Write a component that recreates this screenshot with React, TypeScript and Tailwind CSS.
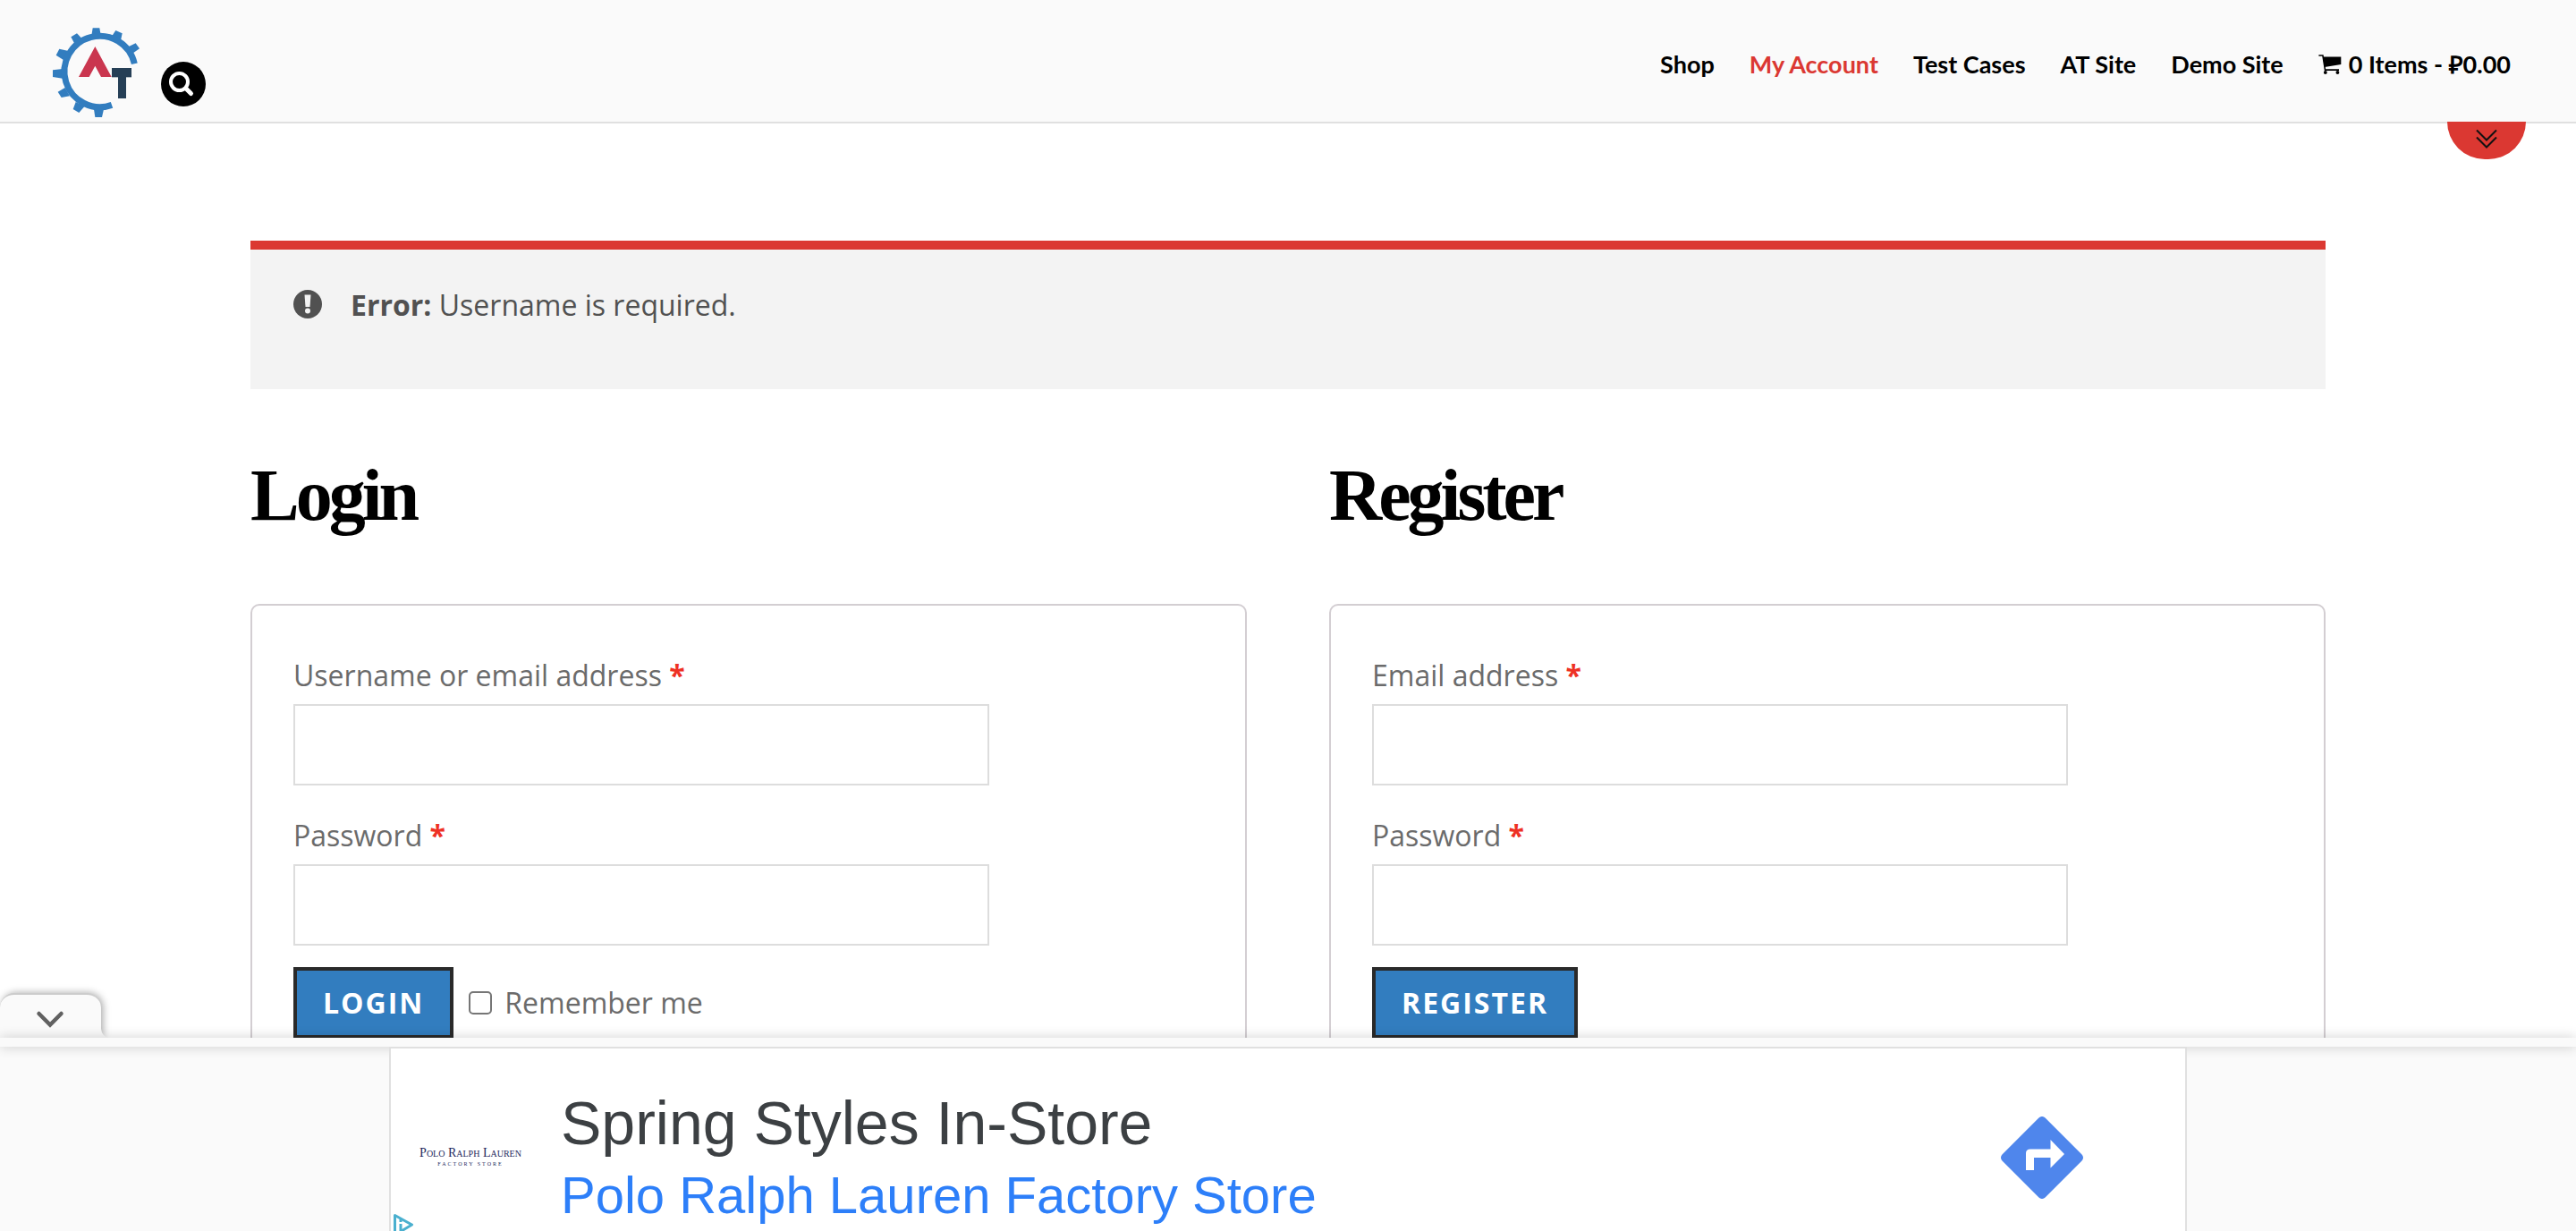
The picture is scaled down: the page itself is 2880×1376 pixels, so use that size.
const navItems = [
  { label: "Shop", active: false },
  { label: "My Account", active: true },
  { label: "Test Cases", active: false },
  { label: "AT Site", active: false },
  { label: "Demo Site", active: false },
];

function Logo() {
  return (
    <svg viewBox="57 63 291 300" className="h-[100px] w-[97px]" aria-hidden="true">
      <g fill="#327dbf">
        <polygon points="191,64 214,64 219,95 186,95" />
        <polygon points="268,72 290,82 284,110 252,96" />
        <polygon points="335,115 348,133 320,152 304,130" />
        <polygon points="118,94 138,82 158,103 132,120" />
        <polygon points="79,134 68,155 94,172 110,141" />
        <polygon points="57,205 57,228 90,233 90,201" />
        <polygon points="74,278 86,297 114,292 98,264" />
        <polygon points="125,336 145,348 164,326 134,312" />
        <polygon points="199,363 222,363 229,332 194,330" />
      </g>
      <path d="M331 184 A 119 119 0 1 0 255 322" fill="none" stroke="#327dbf" strokeWidth="21" />
      <path d="M199 126 L254 228 H219 L199 191 L179 228 H144 Z" fill="#ca364f" />
      <rect x="255" y="198" width="66" height="31" fill="#263f56" />
      <rect x="276" y="228" width="27" height="72" fill="#263f56" />
    </svg>
  );
}

function CartIcon() {
  return (
    <svg viewBox="92 64 80 68" className="h-[22px] w-[26px]" aria-hidden="true">
      <path d="M93 67 H107 L115 117 H163" fill="none" stroke="#000" strokeWidth="5" />
      <path d="M107 72 H170 V98 L113 107 Z" />
      <circle cx="116" cy="126" r="6" />
      <circle cx="158" cy="126" r="6" />
    </svg>
  );
}

function Header() {
  return (
    <header className="flex h-[138px] justify-between border-b-2 border-[#e0e0e0] bg-[#fafafa] pr-[73px] pl-[59px]">
      <div className="flex items-start gap-6 pt-[31px]">
        <a href="#home" aria-label="Home">
          <Logo />
        </a>
        <button type="button" aria-label="Search" className="mt-[38px] flex size-[50px] items-center justify-center rounded-full bg-black">
          <svg viewBox="0 0 50 50" className="size-full" fill="none" stroke="#fff">
            <circle cx="20.500" cy="22.500" r="9.500" strokeWidth="4" />
            <path d="M28 30 L33.500 35.500" strokeWidth="5" strokeLinecap="round" />
          </svg>
        </button>
      </div>
      <nav className="flex h-[144px] items-center gap-[39px] font-['Lato',sans-serif] text-[27px] font-bold text-black">
        {navItems.map((item) => (
          <a key={item.label} href="#page" className={item.active ? "text-[#db3832]" : ""}>
            {item.label}
          </a>
        ))}
        <a href="#cart" className="flex items-center gap-2">
          <CartIcon />
          <span>0 Items - ₽0.00</span>
        </a>
      </nav>
    </header>
  );
}

function TextField({ id, label, type }: { id: string; label: string; type: string }) {
  return (
    <div>
      <label htmlFor={id} className="block h-16 leading-[64px]">
        {label} <span className="font-bold text-[#ee3124]">*</span>
      </label>
      <input id={id} type={type} className="block h-[91px] w-[778px] max-w-full border-2 border-[#ddd] bg-white px-4" />
    </div>
  );
}

function SubmitButton({ children }: { children: string }) {
  return (
    <button type="submit" className="h-[80px] border-4 border-[#2a2a2a] bg-[#327dbf] px-[29px] font-bold tracking-[2px] text-white">
      {children}
    </button>
  );
}

function AdBanner() {
  return (
    <aside className="fixed inset-x-0 bottom-0 font-['Liberation_Sans',sans-serif]">
      <button type="button" aria-label="Collapse" className="relative block h-[50px] w-[113px] rounded-t-[16px] border-t-2 border-[#ccc] bg-[#fafafa] shadow-[2px_0_8px_rgba(0,0,0,0.35)]">
        <svg viewBox="0 0 113 48" className="h-12 w-[113px]" fill="none">
          <path d="M43.500 21 L56 33.500 L68.500 21" stroke="#616161" strokeWidth="4.500" strokeLinecap="round" />
        </svg>
        <svg viewBox="0 0 8 10" className="absolute bottom-0 left-full h-[10px] w-2">
          <path d="M0 0 Q1 8 8 10 H0 Z" fill="#fafafa" />
        </svg>
      </button>
      <div className="relative h-[10px] bg-[#fafafa] shadow-[0_0_14px_rgba(0,0,0,0.2)]" />
      <div className="flex h-[206px] justify-center bg-[#fafafa]">
        <div className="relative flex w-[2010px] items-start border-x-2 border-t-2 border-[#e0e0e0] bg-white">
          <div className="w-[190px] pt-[108px] pr-3 text-center text-[#1c1f5c]">
            <p className="font-['Liberation_Serif',serif] text-[14px] leading-[18px] [font-variant:small-caps]">Polo Ralph Lauren</p>
            <p className="font-['Liberation_Serif',serif] text-[6px] leading-[6px] tracking-[2px]">FACTORY STORE</p>
          </div>
          <div className="flex-1 pt-[43px]">
            <p className="text-[68px] leading-[80px] text-[#3c4043]">Spring Styles In-Store</p>
            <a href="#store" className="block text-[58px] leading-[82px] text-[#2d7ff9]">Polo Ralph Lauren Factory Store</a>
          </div>
          <a href="#directions" aria-label="Directions" className="mt-[76px] mr-[114px]">
            <svg viewBox="0 0 92 92" className="size-[92px]">
              <rect x="12" y="12" width="68" height="68" rx="5" transform="rotate(45 46 46)" fill="#4f86ec" />
              <path d="M28 60 V41 Q28 36.500 33 36.500 H55.500 V26 L71 42 L55.500 57.500 V46 H37 V60 Z" fill="#fff" />
            </svg>
          </a>
          <svg viewBox="0 0 26 20" className="absolute bottom-0 left-0 h-5 w-[26px]" fill="none" stroke="#4bb0cf" strokeWidth="3" strokeLinejoin="round">
            <path d="M4.500 22 V2.500 L23.500 13 L11 20.500" />
            <path d="M11 12 V20 M11 7 V10" />
          </svg>
        </div>
      </div>
    </aside>
  );
}

export default function App() {
  return (
    <div className="h-screen overflow-hidden bg-white font-['Open_Sans',sans-serif] text-[32px] text-[#6b6b6b]">
      <Header />
      <div className="flex h-0 justify-end pr-14">
        <button type="button" aria-label="Expand" className="relative -mt-0.5 h-[42px] w-[88px] rounded-b-[44px] bg-[#db3832]">
          <svg viewBox="0 0 88 42" className="size-full" fill="none" stroke="#111" strokeWidth="2">
            <path d="M33 9.500 L44 20.500 L55 9.500 M33 17.500 L44 28.500 L55 17.500" />
          </svg>
        </button>
      </div>
      <main className="mx-[280px] pt-[131px]">
        <div role="alert" className="flex h-[166px] items-start gap-8 border-t-[10px] border-[#db3832] bg-[#f3f3f3] px-12 pt-10 text-[#515151]">
          <svg viewBox="0 0 32 32" className="mt-[5px] size-8">
            <circle cx="16" cy="16" r="16" fill="#515151" />
            <path d="M12.500 5.500 H19.500 L18.500 19 H13.500 Z" fill="#f3f3f3" />
            <circle cx="16" cy="23.500" r="3" fill="#f3f3f3" />
          </svg>
          <p className="leading-[44px]">
            <strong>Error:</strong> Username is required.
          </p>
        </div>
        <div className="grid grid-cols-2 gap-[92px] pt-[70px]">
          <section>
            <h2 className="h-[170px] font-['Liberation_Serif',serif] text-[82px] leading-[98px] font-bold tracking-[-4px] text-black">Login</h2>
            <form className="flex h-[600px] flex-col gap-6 rounded-[10px] border-2 border-[#d3ced2] px-[46px] pt-[46px]">
              <TextField id="login-user" label="Username or email address" type="text" />
              <TextField id="login-pass" label="Password" type="password" />
              <div className="flex items-center">
                <SubmitButton>LOGIN</SubmitButton>
                <label className="flex items-center gap-3.5 pl-[17px]">
                  <input type="checkbox" className="size-[26px] appearance-none rounded-[5px] border-2 border-[#767676] bg-white" />
                  Remember me
                </label>
              </div>
            </form>
          </section>
          <section>
            <h2 className="h-[170px] font-['Liberation_Serif',serif] text-[82px] leading-[98px] font-bold tracking-[-4px] text-black">Register</h2>
            <form className="flex h-[600px] flex-col gap-6 rounded-[10px] border-2 border-[#d3ced2] px-[46px] pt-[46px]">
              <TextField id="register-email" label="Email address" type="email" />
              <TextField id="register-pass" label="Password" type="password" />
              <div className="flex items-center">
                <SubmitButton>REGISTER</SubmitButton>
              </div>
            </form>
          </section>
        </div>
      </main>
      <AdBanner />
    </div>
  );
}
